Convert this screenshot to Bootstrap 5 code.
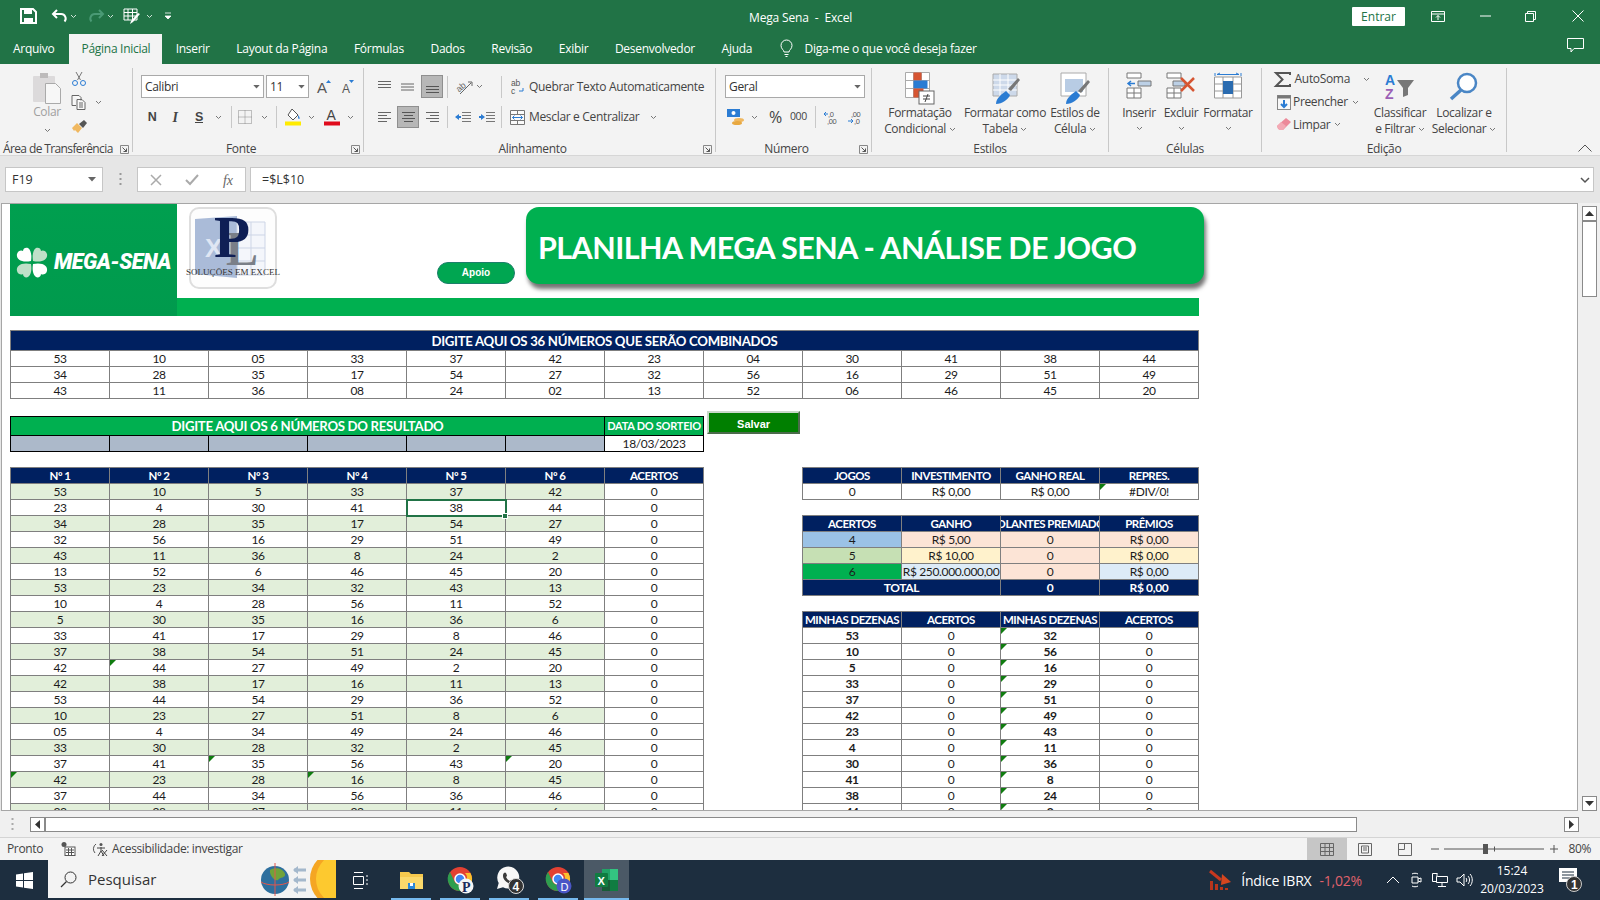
<!DOCTYPE html>
<html lang="pt-BR"><head><meta charset="utf-8"><title>Mega Sena - Excel</title>
<link rel="stylesheet" href="https://cdn.jsdelivr.net/npm/bootstrap@5.3.0/dist/css/bootstrap.min.css">
<style>
html,body{height:100%}
body{width:1600px;height:900px;overflow:hidden;background:#e6e6e6;font-family:"Open Sans","Noto Sans",sans-serif;font-size:12px;color:#444;display:flex;flex-direction:column}
svg{display:block;flex:none;overflow:visible}
.tbar{height:32px;background:#217346;color:#fff;position:relative}
.qa{padding-left:20px}
.wtitle{position:absolute;left:749px;top:9px;font-size:12px;letter-spacing:-.15px}
.entrar{width:53px;height:19px;background:#fff;color:#217346;font-size:12px;line-height:19px;margin-right:26px;border-radius:1px}
.wc{padding-right:16px}
.m34{margin-left:34px}.m35{margin-left:35px}.m36{margin-left:36px}.m14{margin-left:14px}
.tabs{height:32px;background:#217346;color:#fff;font-size:12px;padding-top:2px}
.tb{padding:0 13.3px;line-height:29px;white-space:nowrap;letter-spacing:-.28px}
.tb.first{padding:0;margin:0 15px 0 13px}
.tb.on{background:#f3f3f3;color:#217346;padding:0 12px}
.tellme{margin-left:14px;gap:10px;letter-spacing:-.28px}
.ribbon{height:92px;background:#f3f3f3;border-bottom:1px solid #d6d6d6;padding-top:4px;position:relative}
.rg{height:84px;border-right:1px solid #c8c8c8;position:relative;flex:none;letter-spacing:-.33px}
.rb{height:68px;display:flex}
.rl{position:absolute;left:0;right:0;top:73px;text-align:center;line-height:16px;color:#444}
.rl.wl{padding-right:14px}
.ln{position:absolute;right:3px;top:77px}
.r1{width:133px}.r2{width:231px}.r3{width:352px}.r4{width:156px}.r5{width:237px}.r6{width:153px}.r7{width:245px}
.r1 .rl{text-align:left;padding-left:3px;letter-spacing:-.62px}
.pad31{padding-left:31px}
.paste{width:32px;color:#a0a0a0;line-height:16px;margin-right:8px}
.cbcol{gap:9px;padding-top:3px}
.rowa,.rowb{display:flex;align-items:center}
.rowa{height:23px;margin-top:7px}
.rowb{height:22px;margin-top:8px}
.colf{display:block;width:100%}
.p8{padding-left:8px}.p13{padding-left:13px}.p9{padding-left:9px}.p6{padding-left:6px}.p12{padding-left:12px}
.sel{height:23px;background:#fff;border:1px solid #a9a9a9;padding:0 3px;line-height:21px;color:#333;display:flex;align-items:center;justify-content:space-between}
.w123{width:123px}.w43{width:43px}.w140{width:140px}
.bt{width:16px;text-align:center;font-weight:700;color:#444;font-size:12.5px;font-family:"Liberation Sans",sans-serif}
.it{font-style:italic;font-family:"Liberation Serif",serif;font-size:14px}
.un{text-decoration:underline}
.vs{width:1px;height:22px;background:#c8c8c8;flex:none}
.act{background:#b7b7b7;border:1px solid #8f8f8f;width:22px;height:23px;display:flex;align-items:center;justify-content:center}
.rowb .act{height:22px}
.m2{margin-left:2px}.m3{margin-left:3px}.m4{margin-left:4px}.m5{margin-left:5px}.m6{margin-left:6px}.m7{margin-left:7px}.m8{margin-left:8px}.m9{margin-left:9px}.m10{margin-left:10px}.m11{margin-left:11px}.m13{margin-left:13px}.m16{margin-left:16px}.m18{margin-left:18px}.m19{margin-left:19px}.m26{margin-left:26px}
.bb{display:flex;flex-direction:column;align-items:center;text-align:center;line-height:16px;white-space:nowrap}
.bb>svg{margin-top:4px;height:33px}
.bb .cvb{margin-top:5px;height:5px}
.w84{width:84px}.w86{width:86px}.w54{width:54px}.w42{width:42px}.w52{width:52px}.w60{width:60px}.w68{width:68px}.w96{width:96px}
.erow{height:23px;display:flex;align-items:center}
.ico18{width:19px;display:flex;justify-content:center}
.collapse-up{position:absolute;right:8px;top:80px}
.fbar{height:44px;background:#e6e6e6;padding:11px 6px 0 5px}
.fb{height:25px;background:#fff;border:1px solid #c6c6c6;display:flex;align-items:center}
.nbox{width:98px;padding:0 6px;justify-content:space-between;color:#333;font-size:12.5px}
.dots{width:34px;display:flex;justify-content:center;padding-top:6px}
.fxb{width:109px;justify-content:space-between;padding:0 12px;color:#666;font-family:"Liberation Serif",serif;font-style:italic;font-size:14px}
.finp{flex:1;margin-left:4px;padding:0 3px 0 11px;justify-content:space-between;color:#333;font-size:12.5px}
.fb span{padding-top:2px}
.work{height:611px;display:flex;padding-top:3px;background:#e6e6e6}
.sheet{width:1577px;height:608px;background:#fff;border:1px solid #a6a6a6;margin-left:1px;overflow:hidden;padding-left:8px;font-family:Lato,"Liberation Sans",sans-serif;color:#1c1c1c}
.banner{width:1189px;height:112px;position:relative;display:flex}
.logo{width:167px;height:112px;background:linear-gradient(180deg,#009f4f,#009a4d);display:flex;align-items:center;padding:4px 0 0 6px;gap:6px}
.lname{color:#fff;font-weight:900;font-style:italic;font-family:Roboto,sans-serif;font-size:21.5px;letter-spacing:-.5px;white-space:nowrap}
.band{position:absolute;left:167px;right:0;bottom:0;height:18px;background:#00b050}
.plogo{position:absolute;left:175px;top:3px}
.plcap{font-family:"Liberation Serif",serif;font-size:9px;fill:#333}
.apoio{position:absolute;left:427px;top:58px;width:78px;height:22px;border-radius:11px;background:#00a651;border:1px solid #1c7f6a;color:#fff;font-size:10px;font-weight:700;line-height:20px;text-align:center;font-family:"Liberation Sans",sans-serif}
.ttl{position:absolute;left:516px;top:3px;width:678px;height:77px;border-radius:13px;background:#00b050;box-shadow:2px 5px 4px rgba(0,0,0,.55);color:#fff;font-weight:700;font-size:30.5px;line-height:80px;padding-left:12px;letter-spacing:-.55px;white-space:nowrap;font-family:Lato,sans-serif}
.xt{table-layout:fixed;border-collapse:collapse;font-size:12px;text-align:center}
.xt td,.xt th{height:16px;padding:0;border:1px solid #7f7f7f;line-height:14px;white-space:nowrap;overflow:hidden;position:relative;font-weight:400;letter-spacing:-.35px}
.c12{width:1188px;margin-top:14px}
.c12 col,.c7 col,.c4 col{width:99px}
.c7{width:693px}.c4{width:396px}
.xt .nv th{background:#002060;color:#fff;font-weight:700;letter-spacing:-.5px;font-size:11.5px}
.xt .big th{height:20px;font-size:13.2px;letter-spacing:-.3px}
.xt .gn th{background:#00b050;color:#fff;height:19px;font-weight:700;font-size:13.2px;letter-spacing:-.3px}
.xt .gn .dt{font-size:11px;letter-spacing:-.25px}
.blk td,.blk th{border-color:#000}
.gy td{background:#acb9ca}
.res{margin-top:17px}
.salvar{width:93px;height:23px;margin:12px 0 0 3px;padding:3px 0 0;border-radius:0;background:#007f00;color:#fff;font-size:11px;font-weight:700;line-height:16px;border:2px solid;border-color:#c8d8c8 #4b6b4b #4b6b4b #c8d8c8;font-family:"Liberation Sans",sans-serif}
.lower{margin-top:15px;display:flex;gap:98px}
.rcol{display:flex;flex-direction:column;gap:15px}
.gr td:not(:last-child){background:#e2efda}
.sc{outline:2px solid #217346;outline-offset:-1px;z-index:2}
.cellwrap{position:relative}
.handle{position:absolute;left:492px;top:46px;width:6px;height:6px;background:#217346;border:1px solid #fff;z-index:3}
.gt::before{content:"";position:absolute;left:0;top:0;border-top:6px solid #107c10;border-right:6px solid transparent}
.b4{background:#9bc2e6}.b5{background:#c6e0b4}.b6{background:#00b050}.pe{background:#fce4d6}.ye{background:#fff2cc}.lb{background:#ddebf7}
.tot td{background:#002060;color:#fff;font-weight:700}
.bd td:nth-child(odd){font-weight:700}
.clipc{display:block;margin:0 -30px;text-align:center}
.vsb{width:22px;height:608px;background:#f0f0f0;display:flex;flex-direction:column;align-items:center;padding-top:3px}
.sbtn{width:15px;height:15px;background:#fff;border:1px solid #8a8a8a;display:flex;align-items:center;justify-content:center;flex:none}
.vth{width:15px;height:76px;background:#fff;border:1px solid #8a8a8a}
.hsb{height:27px;background:#f0f0f0;border-bottom:1px solid #d4d4d4;display:flex;align-items:center;padding-left:11px}
.hth{width:1312px;height:15px;background:#fff;border:1px solid #8a8a8a}
.htrack{width:207px}
.stat{height:22px;background:#f3f3f3;display:flex;align-items:center;padding-left:7px;position:relative;color:#444;letter-spacing:-.35px}
.gridv{width:40px;height:22px;background:#c6c6c6;display:flex;align-items:center;justify-content:center}
.pct{margin:0 9px 0 10px}
.taskb{height:40px;background:#1d2e3f;display:flex;align-items:center;color:#fff;position:relative}
.winb{width:48px;display:flex;justify-content:center}
.srch{width:288px;height:38px;margin-bottom:2px;align-self:flex-start;background:#f3f3f3;color:#333;display:flex;align-items:center;padding-left:12px;font-size:15px;gap:11px}
.srch .sp{flex:1}
.tk{width:49px;height:40px;display:flex;align-items:center;justify-content:center;position:relative}
.tk.u::after{content:"";position:absolute;left:4px;right:5px;bottom:0;height:2px;background:#76b9ed}
.tk.ac{background:#4b5966;width:45px;margin-left:1px}
.tk.ac::after{left:0;right:0}
.tvw{margin-left:16px;margin-right:19px}
.ixt{font-size:14px;letter-spacing:-.2px}
.ixp{color:#e0626c;font-size:14px;letter-spacing:-.2px}
.clk{width:70px;text-align:center;font-size:12px;line-height:18px}
</style></head><body>
<svg width="0" height="0" class="position-absolute"><defs>
<symbol id="cv" viewBox="0 0 7 5"><path d="M1 1l2.500 2.500L6 1" fill="none" stroke="#777" stroke-width="1"/></symbol>
<symbol id="cw" viewBox="0 0 7 5"><path d="M1 1l2.500 2.500L6 1" fill="none" stroke="#cfe3d8" stroke-width="1"/></symbol>
<symbol id="dd" viewBox="0 0 8 5"><path d="M0 0h8L4 4.500z" fill="#666"/></symbol>
<symbol id="lnc" viewBox="0 0 9 9"><path d="M.5.5h8v8h-8z" fill="none" stroke="#888"/><path d="M2.500 2.500l4 4M6.500 3.500v3h-3" fill="none" stroke="#555"/></symbol>
</defs></svg>

<header class="tbar d-flex align-items-center">
 <div class="qa d-flex align-items-center">
  <svg width="17" height="16" viewBox="0 0 17 16"><path d="M1 1h12l3 3v11H1z" fill="none" stroke="#fff" stroke-width="2"/><path d="M4 1.500h8V6H4zM4 10h9v5H4z" fill="#fff"/></svg>
  <svg class="m14" width="17" height="14" viewBox="0 0 17 14"><path d="M6 1L2 5l4 4" fill="none" stroke="#fff" stroke-width="2"/><path d="M2 5h8a4.500 4.500 0 0 1 3.500 7.500" fill="none" stroke="#fff" stroke-width="2"/></svg>
  <svg class="m2" width="7" height="5"><use href="#cw"/></svg>
  <svg class="m11" width="16" height="14" viewBox="0 0 16 14"><path d="M11 1l4 4-4 4M15 5H7a4.500 4.500 0 0 0-3.500 7.500" fill="none" stroke="#4a9a75" stroke-width="2"/></svg>
  <svg class="m3" width="7" height="5"><use href="#cw"/></svg>
  <svg class="m9" width="18" height="17" viewBox="0 0 18 17"><path d="M1 1h13v11H1zM1 4.500h13M1 8h13M5 1v11M9.500 1v11" fill="none" stroke="#fff"/><path d="M17 6l-7 8-3 2 1-3 7-8z" fill="#fff"/></svg>
  <svg class="m5" width="7" height="5"><use href="#cw"/></svg>
  <svg class="m11" width="8" height="8" viewBox="0 0 8 8"><path d="M1 1h6M1 4h6L4 7z" fill="#fff" stroke="#fff" stroke-width=".8"/></svg>
 </div>
 <div class="wtitle">Mega Sena&nbsp; -&nbsp; Excel</div>
 <div class="ms-auto d-flex align-items-center wc">
  <div class="entrar text-center">Entrar</div>
  <svg width="14" height="11" viewBox="0 0 14 11"><path d="M.5.5h13v10H.5zM.5 3h13M7 9V4.500M5 6.500l2-2 2 2" fill="none" stroke="#fff"/></svg>
  <svg class="m35" width="11" height="2" viewBox="0 0 11 2"><path d="M0 1h11" stroke="#fff"/></svg>
  <svg class="m34" width="11" height="11" viewBox="0 0 11 11"><path d="M.5 2.500h8v8h-8zM2.500 2.500v-2h8v8h-2" fill="none" stroke="#fff"/></svg>
  <svg class="m36" width="12" height="12" viewBox="0 0 12 12"><path d="M.5.5l11 11M11.500.5l-11 11" stroke="#fff"/></svg>
 </div>
</header>

<nav class="tabs d-flex position-relative">
 <div class="tb first">Arquivo</div><div class="tb on">Página Inicial</div><div class="tb">Inserir</div><div class="tb">Layout da Página</div><div class="tb">Fórmulas</div><div class="tb">Dados</div><div class="tb">Revisão</div><div class="tb">Exibir</div><div class="tb">Desenvolvedor</div><div class="tb">Ajuda</div>
 <div class="tellme d-flex align-items-center">
  <svg width="15" height="18" viewBox="0 0 15 18"><path d="M5 12c0-2-3-3-3-6.500a5.500 5.500 0 0 1 11 0C13 9 10 10 10 12zM5.500 14.500h4M6.500 16.500h2" fill="none" stroke="#fff"/></svg><span>Diga-me o que você deseja fazer</span>
 </div>
 <svg class="position-absolute end-0 me-3 mt-1" width="17" height="15" viewBox="0 0 17 15"><path d="M.5.5h16v10H7l-3 3.500v-3.500H.5z" fill="none" stroke="#fff"/></svg>
</nav>

<section class="ribbon d-flex">
 <div class="rg r1"><div class="rb pad31">
   <div class="paste text-center">
    <svg class="mt-1 mx-auto" width="30" height="32" viewBox="0 0 30 32"><rect x="1" y="4" width="22" height="26" rx="1" fill="#dcdadb"/><path d="M8 1h8v5H8z" fill="#bdbbbb"/><path d="M13.500 11.500h10l5 5v15h-15z" fill="#f7f7f7" stroke="#aaa"/></svg>
    <div class="colf mt-0">Colar</div>
    <svg class="mx-auto mt-2" width="7" height="5"><use href="#cv"/></svg>
   </div>
   <div class="d-flex flex-column cbcol">
    <svg width="16" height="15" viewBox="0 0 16 15"><path d="M5 1l4.500 8M11 1L6.500 9" stroke="#777" fill="none"/><circle cx="4" cy="12" r="2.500" fill="none" stroke="#2b7cd3"/><circle cx="12" cy="12" r="2.500" fill="none" stroke="#2b7cd3"/></svg>
    <div class="d-flex align-items-center"><svg width="16" height="15" viewBox="0 0 16 15"><path d="M1 .5h7l2 2v3M1 .5v10h4M6 4.500h5l3 3v7H6zM8 8h4M8 10h4M8 12h4" fill="#f9f9f9" stroke="#666"/></svg><svg class="m8" width="7" height="5"><use href="#cv"/></svg></div>
    <svg width="17" height="15" viewBox="0 0 17 15"><path d="M1 9l5-5 5 5-4 5-3-3-1 1z" fill="#f0b860"/><path d="M8 5l5-4 3 3-4 5z" fill="#555"/></svg>
   </div>
  </div><div class="rl">Área de Transferência</div><svg class="ln" width="9" height="9"><use href="#lnc"/></svg></div>

 <div class="rg r2 p8">
  <div class="rowa"><div class="sel w123"><span>Calibri</span><svg width="7" height="4"><use href="#dd"/></svg></div><div class="sel w43 m2"><span>11</span><svg width="7" height="4"><use href="#dd"/></svg></div>
   <svg class="m8" width="15" height="15" viewBox="0 0 15 15"><text x="0" y="14" font-size="15" fill="#555" font-family="Liberation Sans">A</text><path d="M9 4l2.500-3L14 4z" fill="#2b7cd3"/></svg>
   <svg class="m10" width="13" height="15" viewBox="0 0 13 15"><text x="0" y="14" font-size="12" fill="#555" font-family="Liberation Sans">A</text><path d="M7 1h5L9.500 4z" fill="#2b7cd3"/></svg></div>
  <div class="rowb"><div class="bt m3">N</div><div class="bt it m7">I</div><div class="bt un m8">S</div><svg class="m8" width="7" height="5"><use href="#cv"/></svg><div class="vs m9"></div>
   <svg class="m6" width="14" height="14" viewBox="0 0 14 14"><path d="M.5.5h13v13H.5zM7 .5v13M.5 7h13" fill="none" stroke="#888" stroke-dasharray="1 1"/></svg><svg class="m9" width="7" height="5"><use href="#cv"/></svg><div class="vs m8"></div>
   <svg class="m8" width="16" height="18" viewBox="0 0 16 18"><path d="M7 1l6 6-5 5-5-5z" fill="#fff" stroke="#555"/><path d="M13 7c2 2 2 4 1 4s-1-2-1-4z" fill="#2b7cd3"/><rect y="13.500" width="16" height="4" fill="#ffeb00"/></svg><svg class="m7" width="7" height="5"><use href="#cv"/></svg>
   <svg class="m9" width="16" height="18" viewBox="0 0 16 18"><text x="2.500" y="12" font-size="14" fill="#444" font-family="Liberation Sans">A</text><rect y="13.500" width="16" height="4" fill="#e00b1c"/></svg><svg class="m7" width="7" height="5"><use href="#cv"/></svg></div>
  <div class="rl wl">Fonte</div><svg class="ln" width="9" height="9"><use href="#lnc"/></svg></div>

 <div class="rg r3 p13">
  <div class="rowa">
   <svg width="15" height="12" viewBox="0 0 15 12"><path d="M1 .5h13M1 3.500h13M1 6.500h13" stroke="#666"/></svg>
   <svg class="m8" width="15" height="12" viewBox="0 0 15 12"><path d="M1 3h13M1 6h13M1 9h13" stroke="#666"/></svg>
   <div class="act m6"><svg width="15" height="12" viewBox="0 0 15 12"><path d="M1 5.500h13M1 8.500h13M1 11.500h13" stroke="#555"/></svg></div>
   <div class="vs m4"></div>
   <svg class="m7" width="18" height="16" viewBox="0 0 18 16"><text x="1" y="11" font-size="9" fill="#666" font-family="Liberation Sans" transform="rotate(-40 6 8)">ab</text><path d="M5 15L16 4M13 3h4v4" fill="none" stroke="#666"/></svg>
   <svg class="m3" width="7" height="5"><use href="#cv"/></svg>
   <div class="vs m18"></div>
   <svg class="m9" width="15" height="16" viewBox="0 0 15 16"><text x="0" y="7" font-size="8.500" fill="#555" font-family="Liberation Sans">ab</text><text x="0" y="15" font-size="8.500" fill="#555" font-family="Liberation Sans">c</text><path d="M12 9v3H8" stroke="#2b7cd3" fill="none"/></svg>
   <span class="m3 text-nowrap">Quebrar Texto Automaticamente</span>
  </div>
  <div class="rowb">
   <svg width="15" height="11" viewBox="0 0 15 11"><path d="M1 .5h13M1 3.500h9M1 6.500h13M1 9.500h9" stroke="#666"/></svg>
   <div class="act m5"><svg width="15" height="11" viewBox="0 0 15 11"><path d="M1 .5h13M3 3.500h9M1 6.500h13M3 9.500h9" stroke="#555"/></svg></div>
   <svg class="m6" width="15" height="11" viewBox="0 0 15 11"><path d="M1 .5h13M5 3.500h9M1 6.500h13M5 9.500h9" stroke="#666"/></svg>
   <div class="vs m7"></div>
   <svg class="m7" width="16" height="12" viewBox="0 0 16 12"><path d="M7 1.500h9M7 4.500h9M7 7.500h9M7 10.500h9" stroke="#777"/><path d="M0 6l4-3v2h2v2H4v2z" fill="#2b7cd3"/></svg>
   <svg class="m8" width="16" height="12" viewBox="0 0 16 12"><path d="M7 1.500h9M7 4.500h9M7 7.500h9M7 10.500h9" stroke="#777"/><path d="M6 6L2 3v2H0v2h2v2z" fill="#2b7cd3"/></svg>
   <div class="vs m6"></div>
   <svg class="m8" width="15" height="15" viewBox="0 0 15 15"><path d="M.5.5h14v14H.5zM.5 4.500h14M.5 10.500h14M7.500.5v4M7.500 10.500v4" fill="#fafafa" stroke="#777"/><path d="M2.500 7.500h10M4.500 5.500l-2 2 2 2M10.500 5.500l2 2-2 2" fill="none" stroke="#2b7cd3"/></svg>
   <span class="m4 text-nowrap">Mesclar e Centralizar</span>
   <svg class="m11" width="7" height="5"><use href="#cv"/></svg>
  </div>
  <div class="rl wl">Alinhamento</div><svg class="ln" width="9" height="9"><use href="#lnc"/></svg></div>

 <div class="rg r4 p9">
  <div class="rowa"><div class="sel w140"><span>Geral</span><svg width="7" height="4"><use href="#dd"/></svg></div></div>
  <div class="rowb">
   <svg class="m2" width="18" height="18" viewBox="0 0 18 18"><rect y="1" width="13" height="8" fill="#2b7cd3"/><circle cx="6.500" cy="5" r="2" fill="#fff"/><ellipse cx="12" cy="12" rx="5" ry="2" fill="#f0b860"/><ellipse cx="10" cy="15" rx="5" ry="2" fill="#e8a840"/></svg>
   <svg class="m6" width="7" height="5"><use href="#cv"/></svg>
   <span class="m11 fs-6 lh-1">%</span><span class="m8 small">000</span><div class="vs m8"></div>
   <svg class="m8" width="13" height="15" viewBox="0 0 13 15"><text x="4" y="7" font-size="7.500" fill="#555" font-family="Liberation Sans">,0</text><text x="3" y="14" font-size="7.500" fill="#555" font-family="Liberation Sans">,00</text><path d="M0 4h4M2 2L0 4l2 2" stroke="#2b7cd3" fill="none"/></svg>
   <svg class="m11" width="14" height="15" viewBox="0 0 14 15"><text x="3" y="7" font-size="7.500" fill="#555" font-family="Liberation Sans">,00</text><text x="6" y="14" font-size="7.500" fill="#555" font-family="Liberation Sans">,0</text><path d="M0 11h5M3 9l2 2-2 2" stroke="#2b7cd3" fill="none"/></svg>
  </div>
  <div class="rl wl">Número</div><svg class="ln" width="9" height="9"><use href="#lnc"/></svg></div>

 <div class="rg r5 p6"><div class="rb">
   <div class="bb w84"><svg width="30" height="33" viewBox="0 0 30 33"><path d="M.5.500h24v25H.5zM.5 8.500h24M.5 16.500h24M8.500.5v25M16.500.5v25" fill="#fff" stroke="#aaa"/><rect x="8.500" y=".5" width="8" height="8" fill="#d65532"/><rect x="8.500" y="8.500" width="14" height="8" fill="#2b7cd3"/><rect x="8.500" y="16.500" width="10" height="9" fill="#d65532"/><rect x="14" y="19" width="15" height="13" fill="#fff" stroke="#666"/><path d="M18 24h7M18 27h7M23 22l-3 8" stroke="#444" fill="none"/></svg><span>Formatação</span><span>Condicional <svg class="d-inline-block" width="7" height="5"><use href="#cv"/></svg></span></div>
   <div class="bb w86"><svg width="30" height="33" viewBox="0 0 30 33"><path d="M3 2h24v22H3z" fill="#cdd9ea" stroke="#aaa"/><path d="M3 8h24M3 13h24M3 18h24M10 2v22M18 2v22" stroke="#fff"/><path d="M28 6l2 2-9 11-3-2z" fill="#777"/><path d="M6 32c0-6 6-10 10-13l4 4c-1 4-8 9-14 9z" fill="#2b7cd3"/></svg><span>Formatar como</span><span>Tabela <svg class="d-inline-block" width="7" height="5"><use href="#cv"/></svg></span></div>
   <div class="bb w54"><svg width="30" height="33" viewBox="0 0 30 33"><path d="M1 1h25v23H1z" fill="#fff" stroke="#aaa"/><path d="M5 7h18v13H5z" fill="#b8cce4"/><path d="M28 8l2 2-9 11-3-2z" fill="#777"/><path d="M6 32c0-6 6-10 10-13l4 4c-1 4-8 9-14 9z" fill="#2b7cd3"/></svg><span>Estilos de</span><span>Célula <svg class="d-inline-block" width="7" height="5"><use href="#cv"/></svg></span></div>
  </div><div class="rl">Estilos</div></div>

 <div class="rg r6 p9"><div class="rb">
   <div class="bb w42"><svg width="26" height="33" viewBox="0 0 26 33"><path d="M1 1h14v5H1zM1 16h14v10H1zM8 16v10M1 21h14" fill="#fff" stroke="#777"/><path d="M12 9h13v5H12z" fill="#bcd0e6" stroke="#777"/><path d="M9 11.500H2M5 9l-3 2.500L5 14" fill="none" stroke="#2b7cd3" stroke-width="1.500"/></svg><span class="mt-0">Inserir</span><svg class="cvb" width="7" height="5"><use href="#cv"/></svg></div>
   <div class="bb w42"><svg width="30" height="33" viewBox="0 0 30 33"><path d="M1 1h14v5H1zM1 16h14v10H1zM8 16v10M1 21h14" fill="#fff" stroke="#777"/><path d="M7 9h12v5H7z" fill="#bcd0e6" stroke="#777"/><path d="M15 6l13 13M28 6L15 19" stroke="#d65532" stroke-width="2.500"/></svg><span>Excluir</span><svg class="cvb" width="7" height="5"><use href="#cv"/></svg></div>
   <div class="bb w52"><svg width="28" height="33" viewBox="0 0 28 33"><path d="M1 4l0-3M27 1v3M3 2.500h22M3 2.500l3-1.500M25 2.500l-3-1.500" stroke="#2b7cd3" fill="none"/><path d="M.5 5h27v21H.5zM.5 12h27M.5 19h27M9 5v21M19 5v21" fill="#fff" stroke="#999"/><rect x="9" y="9" width="10" height="13" fill="#2b6cb0"/></svg><span>Formatar</span><svg class="cvb" width="7" height="5"><use href="#cv"/></svg></div>
  </div><div class="rl">Células</div></div>

 <div class="rg r7 p12"><div class="rb">
   <div class="d-flex flex-column w96">
    <div class="erow"><div class="ico18"><svg width="16" height="15" viewBox="0 0 16 15"><path d="M15 3V1H1l6.500 6.500L1 14h14v-2" fill="none" stroke="#555" stroke-width="2"/></svg></div><span class="m3">AutoSoma</span><svg class="m13" width="7" height="5"><use href="#cv"/></svg></div>
    <div class="erow"><div class="ico18"><svg width="14" height="15" viewBox="0 0 14 15"><rect x=".5" y=".5" width="13" height="14" fill="#f8f8f8" stroke="#888"/><rect x=".5" y=".5" width="13" height="3" fill="#777"/><path d="M7 5v7M4 9l3 3 3-3" fill="none" stroke="#2b7cd3" stroke-width="2"/></svg></div><span>Preencher</span><svg class="m4" width="7" height="5"><use href="#cv"/></svg></div>
    <div class="erow"><div class="ico18"><svg width="14" height="13" viewBox="0 0 14 13"><path d="M9 0l5 4-8 8-5-1-1-3z" fill="#ec8a9a"/><path d="M0 8l4-4 5 4-3 4H2z" fill="#f3aab5"/></svg></div><span>Limpar</span><svg class="m4" width="7" height="5"><use href="#cv"/></svg></div>
   </div>
   <div class="bb w60"><svg width="30" height="33" viewBox="0 0 30 33"><text x="0" y="13" font-size="14" font-weight="700" fill="#2b7cd3" font-family="Liberation Sans">A</text><text x="0" y="27" font-size="14" font-weight="700" fill="#9b5fb5" font-family="Liberation Sans">Z</text><path d="M12 8h17l-6 8v7l-5 2v-9z" fill="#777"/></svg><span>Classificar</span><span>e Filtrar <svg class="d-inline-block" width="7" height="5"><use href="#cv"/></svg></span></div>
   <div class="bb w68"><svg width="30" height="33" viewBox="0 0 30 33"><circle cx="18" cy="11" r="9" fill="#fff" stroke="#4a86c5" stroke-width="2.500"/><path d="M12 18L2 27" stroke="#4a86c5" stroke-width="3.500"/></svg><span>Localizar e</span><span>Selecionar <svg class="d-inline-block" width="7" height="5"><use href="#cv"/></svg></span></div>
  </div><div class="rl">Edição</div></div>
 <svg class="collapse-up" width="14" height="8" viewBox="0 0 14 8"><path d="M.5 7.500L7 1l6.500 6.500" fill="none" stroke="#555"/></svg>
</section>

<section class="fbar d-flex">
 <div class="fb nbox"><span>F19</span><svg width="8" height="5"><use href="#dd"/></svg></div>
 <div class="dots"><svg width="3" height="13" viewBox="0 0 3 13"><path d="M1.500 0v13" stroke="#999" stroke-width="2" stroke-dasharray="2 3"/></svg></div>
 <div class="fb fxb"><svg width="12" height="12" viewBox="0 0 12 12"><path d="M1 1l10 10M11 1L1 11" stroke="#aaa" stroke-width="1.500"/></svg><svg width="14" height="12" viewBox="0 0 14 12"><path d="M1 6l4 4 8-9" fill="none" stroke="#aaa" stroke-width="2"/></svg><span>fx</span></div>
 <div class="fb finp"><span>=$L$10</span><svg width="10" height="6" viewBox="0 0 10 6"><path d="M1 1l4 4 4-4" fill="none" stroke="#555" stroke-width="1.500"/></svg></div>
</section>

<main class="work">
 <div class="sheet">
  <div class="banner">
   <div class="logo"><svg width="32" height="31" viewBox="0 0 32 31"><path d="M15 14C5 16 0 12 1 7c1-4 5-4 6-3 0-3 3-4 5-3 3 2 4 7 3 13z" fill="#fff"/><path d="M17 14c10 2 15-2 14-7-1-4-5-4-6-3 0-3-3-4-5-3-3 2-4 7-3 13z" fill="#bfe0c8"/><path d="M15 17C5 15 0 19 1 24c1 4 5 4 6 3 0 3 3 4 5 3 3-2 4-7 3-13z" fill="#bfe0c8"/><path d="M17 17c10-2 15 2 14 7-1 4-5 4-6 3 0 3-3 4-5 3-3-2-4-7-3-13z" fill="#fff"/></svg><span class="lname">MEGA-SENA</span></div>
   <div class="band"></div>
   <svg class="plogo" width="98" height="84" viewBox="0 0 98 84"><rect x="5" y="1" width="86" height="80" rx="9" fill="#fdfdfd" stroke="#dedede" stroke-width="2"/><path d="M10 12l42-3v62l-42-4z" fill="#aabbd8"/><path d="M52 15h28v53H52z" fill="#f4f6fb" stroke="#cdd5e6"/><path d="M52 28h28M52 41h28M52 54h28M66 15v53" stroke="#cdd5e6"/><text x="20" y="50" font-size="26" fill="#dfe6f3" font-family="Liberation Sans" font-weight="700">X</text><text x="41" y="58" font-size="48" fill="#7a7f88" font-weight="700" font-family="Liberation Serif">L</text><text x="29" y="50" font-size="59" fill="#0f1f55" font-weight="700" font-family="Liberation Serif">P</text><text class="plcap" x="1" y="68" textLength="94" lengthAdjust="spacingAndGlyphs">SOLUÇÕES EM EXCEL</text></svg>
   <div class="apoio">Apoio</div>
   <div class="ttl">PLANILHA MEGA SENA - ANÁLISE DE JOGO</div>
  </div>

  <table class="xt c12">
   <colgroup><col><col><col><col><col><col><col><col><col><col><col><col></colgroup>
   <tr class="nv big"><th colspan="12" class="blk">DIGITE AQUI OS 36 NÚMEROS QUE SERÃO COMBINADOS</th></tr>
   <tr><td>53</td><td>10</td><td>05</td><td>33</td><td>37</td><td>42</td><td>23</td><td>04</td><td>30</td><td>41</td><td>38</td><td>44</td></tr>
   <tr><td>34</td><td>28</td><td>35</td><td>17</td><td>54</td><td>27</td><td>32</td><td>56</td><td>16</td><td>29</td><td>51</td><td>49</td></tr>
   <tr><td>43</td><td>11</td><td>36</td><td>08</td><td>24</td><td>02</td><td>13</td><td>52</td><td>06</td><td>46</td><td>45</td><td>20</td></tr>
  </table>

  <div class="d-flex">
   <table class="xt c7 res blk">
    <colgroup><col><col><col><col><col><col><col></colgroup>
    <tr class="gn"><th colspan="6">DIGITE AQUI OS 6 NÚMEROS DO RESULTADO</th><th class="dt">DATA DO SORTEIO</th></tr>
    <tr class="gy"><td></td><td></td><td></td><td></td><td></td><td></td><td class="bg-white">18/03/2023</td></tr>
   </table>
   <button type="button" class="btn salvar">Salvar</button>
  </div>

  <div class="lower">
   <div class="cellwrap">
   <table class="xt c7">
    <colgroup><col><col><col><col><col><col><col></colgroup>
    <tr class="nv"><th>Nº 1</th><th>Nº 2</th><th>Nº 3</th><th>Nº 4</th><th>Nº 5</th><th>Nº 6</th><th>ACERTOS</th></tr>
    <tr class="gr"><td>53</td><td>10</td><td>5</td><td>33</td><td>37</td><td>42</td><td>0</td></tr>
    <tr><td>23</td><td>4</td><td>30</td><td>41</td><td class="sc">38</td><td>44</td><td>0</td></tr>
    <tr class="gr"><td>34</td><td>28</td><td>35</td><td>17</td><td>54</td><td>27</td><td>0</td></tr>
    <tr><td>32</td><td>56</td><td>16</td><td>29</td><td>51</td><td>49</td><td>0</td></tr>
    <tr class="gr"><td>43</td><td>11</td><td>36</td><td>8</td><td>24</td><td>2</td><td>0</td></tr>
    <tr><td>13</td><td>52</td><td>6</td><td>46</td><td>45</td><td>20</td><td>0</td></tr>
    <tr class="gr"><td>53</td><td>23</td><td>34</td><td>32</td><td>43</td><td>13</td><td>0</td></tr>
    <tr><td>10</td><td>4</td><td>28</td><td>56</td><td>11</td><td>52</td><td>0</td></tr>
    <tr class="gr"><td>5</td><td>30</td><td>35</td><td>16</td><td>36</td><td>6</td><td>0</td></tr>
    <tr><td>33</td><td>41</td><td>17</td><td>29</td><td>8</td><td>46</td><td>0</td></tr>
    <tr class="gr"><td>37</td><td>38</td><td>54</td><td>51</td><td>24</td><td>45</td><td>0</td></tr>
    <tr><td>42</td><td class="gt">44</td><td>27</td><td>49</td><td>2</td><td>20</td><td>0</td></tr>
    <tr class="gr"><td>42</td><td>38</td><td>17</td><td>16</td><td>11</td><td>13</td><td>0</td></tr>
    <tr><td>53</td><td>44</td><td>54</td><td>29</td><td>36</td><td>52</td><td>0</td></tr>
    <tr class="gr"><td>10</td><td>23</td><td>27</td><td>51</td><td>8</td><td>6</td><td>0</td></tr>
    <tr><td>05</td><td>4</td><td>34</td><td>49</td><td>24</td><td>46</td><td>0</td></tr>
    <tr class="gr"><td>33</td><td>30</td><td>28</td><td>32</td><td>2</td><td>45</td><td>0</td></tr>
    <tr><td>37</td><td>41</td><td class="gt">35</td><td>56</td><td>43</td><td class="gt">20</td><td>0</td></tr>
    <tr class="gr"><td class="gt">42</td><td>23</td><td>28</td><td class="gt">16</td><td>8</td><td>45</td><td>0</td></tr>
    <tr><td>37</td><td>44</td><td>34</td><td>56</td><td>36</td><td>46</td><td>0</td></tr>
    <tr class="gr"><td>33</td><td>28</td><td>27</td><td>32</td><td>11</td><td>6</td><td>0</td></tr>
   </table>
   <div class="handle"></div>
   </div>
   <div class="rcol">
    <table class="xt c4">
     <colgroup><col><col><col><col></colgroup>
     <tr class="nv"><th>JOGOS</th><th>INVESTIMENTO</th><th>GANHO REAL</th><th>REPRES.</th></tr>
     <tr><td>0</td><td>R$ 0,00</td><td>R$ 0,00</td><td class="gt">#DIV/0!</td></tr>
    </table>
    <table class="xt c4">
     <colgroup><col><col><col><col></colgroup>
     <tr class="nv"><th>ACERTOS</th><th>GANHO</th><th><span class="clipc">VOLANTES PREMIADOS</span></th><th>PRÊMIOS</th></tr>
     <tr><td class="b4">4</td><td class="pe">R$ 5,00</td><td class="pe">0</td><td class="pe">R$ 0,00</td></tr>
     <tr><td class="b5">5</td><td class="ye">R$ 10,00</td><td class="pe">0</td><td class="ye">R$ 0,00</td></tr>
     <tr><td class="b6">6</td><td class="lb">R$ 250.000.000,00</td><td class="pe">0</td><td class="lb">R$ 0,00</td></tr>
     <tr class="tot"><td colspan="2">TOTAL</td><td>0</td><td>R$ 0,00</td></tr>
    </table>
    <table class="xt c4 bd">
     <colgroup><col><col><col><col></colgroup>
     <tr class="nv"><th>MINHAS DEZENAS</th><th>ACERTOS</th><th>MINHAS DEZENAS</th><th>ACERTOS</th></tr>
     <tr><td>53</td><td>0</td><td class="gt">32</td><td>0</td></tr>
     <tr><td>10</td><td>0</td><td class="gt">56</td><td>0</td></tr>
     <tr><td>5</td><td>0</td><td class="gt">16</td><td>0</td></tr>
     <tr><td>33</td><td>0</td><td class="gt">29</td><td>0</td></tr>
     <tr><td>37</td><td>0</td><td class="gt">51</td><td>0</td></tr>
     <tr><td>42</td><td>0</td><td class="gt">49</td><td>0</td></tr>
     <tr><td>23</td><td>0</td><td class="gt">43</td><td>0</td></tr>
     <tr><td>4</td><td>0</td><td class="gt">11</td><td>0</td></tr>
     <tr><td>30</td><td>0</td><td class="gt">36</td><td>0</td></tr>
     <tr><td>41</td><td>0</td><td class="gt">8</td><td>0</td></tr>
     <tr><td>38</td><td>0</td><td class="gt">24</td><td>0</td></tr>
     <tr><td>44</td><td>0</td><td class="gt">2</td><td>0</td></tr>
    </table>
   </div>
  </div>
 </div>
 <div class="vsb">
  <div class="sbtn"><svg width="9" height="5" viewBox="0 0 9 5"><path d="M0 5l4.500-5L9 5z" fill="#333"/></svg></div>
  <div class="vth"></div>
  <div class="sbtn mt-auto"><svg width="9" height="5" viewBox="0 0 9 5"><path d="M0 0l4.500 5L9 0z" fill="#333"/></svg></div>
 </div>
</main>

<div class="hsb">
 <svg width="3" height="13" viewBox="0 0 3 13"><path d="M1.500 0v13" stroke="#aaa" stroke-width="2" stroke-dasharray="2 3"/></svg>
 <div class="sbtn m16"><svg width="5" height="9" viewBox="0 0 5 9"><path d="M5 0L0 4.500 5 9z" fill="#333"/></svg></div>
 <div class="hth"></div>
 <div class="htrack"></div>
 <div class="sbtn"><svg width="5" height="9" viewBox="0 0 5 9"><path d="M0 0l5 4.500L0 9z" fill="#333"/></svg></div>
</div>

<footer class="stat">
 <span>Pronto</span>
 <svg class="m18" width="15" height="14" viewBox="0 0 15 14"><rect x="4" y="5" width="10" height="8.500" fill="#fff" stroke="#555"/><path d="M5 8h8M5 10.500h8M7.500 6v7M10.500 6v7" stroke="#555"/><circle cx="3" cy="2.500" r="2.500" fill="#555"/></svg>
 <svg class="ms-3" width="16" height="15" viewBox="0 0 16 15"><path d="M4 2a6 6 0 0 0-1 9" fill="none" stroke="#555"/><circle cx="9" cy="2.500" r="1.500" fill="#555"/><path d="M5 6h8M9 5v4M6 14l3-5 3 5M10 8l5 6M15 8l-5 6" stroke="#444" fill="none"/></svg>
 <span class="ms-1">Acessibilidade: investigar</span>
 <div class="ms-auto d-flex align-items-center">
  <div class="gridv"><svg width="14" height="13" viewBox="0 0 14 13"><path d="M.5.5h13v12H.5zM.5 4.500h13M.5 8.500h13M5 .5v12M9.500.5v12" fill="none" stroke="#666"/></svg></div>
  <svg class="m11" width="14" height="13" viewBox="0 0 14 13"><path d="M.5.5h13v12H.5z" fill="none" stroke="#666"/><path d="M3.500 3h7v7h-7zM5 5h4M5 7h4" fill="none" stroke="#666"/></svg>
  <svg class="m26" width="14" height="13" viewBox="0 0 14 13"><path d="M.5.5h13v12H.5zM.5 6.500h6V.5" fill="none" stroke="#666"/></svg>
  <svg class="m19" width="9" height="2" viewBox="0 0 9 2"><path d="M0 1h8" stroke="#555"/></svg>
  <svg class="m4" width="100" height="12" viewBox="0 0 100 12"><path d="M0 6h100" stroke="#555"/><path d="M50.500 3.500v5" stroke="#555"/><rect x="39" y="1" width="5" height="10" fill="#555"/></svg>
  <svg class="m6" width="8" height="8" viewBox="0 0 8 8"><path d="M0 4h8M4 0v8" stroke="#555"/></svg>
  <span class="pct">80%</span>
 </div>
</footer>

<div class="taskb">
 <div class="winb"><svg width="17" height="17" viewBox="0 0 17 17"><path d="M0 2.500l7-1v6.500H0zM8 1.300l9-1.300v8H8zM0 9h7v6.500l-7-1zM8 9h9v8l-9-1.300z" fill="#fff"/></svg></div>
 <div class="srch"><svg width="17" height="17" viewBox="0 0 17 17"><circle cx="10.500" cy="6.500" r="5.500" fill="none" stroke="#333"/><path d="M6.500 10.500L1 16" stroke="#333" stroke-width="1.300"/></svg><span>Pesquisar</span><span class="sp"></span>
  <svg width="78" height="38" viewBox="0 0 78 38"><defs><clipPath id="sunc"><rect x="52" width="26" height="38"/></clipPath></defs><circle cx="80" cy="19" r="28" fill="#f5a623" clip-path="url(#sunc)"/><circle cx="84" cy="19" r="26" fill="#fdc92f" clip-path="url(#sunc)"/><circle cx="17" cy="20" r="14" fill="#2d6f9e"/><path d="M12 10c5-3 13-2 15 4 1 4-5 3-7 6-3 2-9-5-8-10z" fill="#6fa33a"/><path d="M17 3v33M3 22c6 4 22 4 28 0" stroke="#e2574c" fill="none"/><path d="M36 10h12M36 20h12M36 30h12" stroke="#a4b8cc" stroke-width="3"/><path d="M40 6l-5 4 5 4zM40 16l-5 4 5 4zM40 26l-5 4 5 4z" fill="#a4b8cc"/></svg>
 </div>
 <div class="tvw"><svg width="16" height="17" viewBox="0 0 16 17"><path d="M2 .5h9M2 16.500h9M1.500 4.500h10v8h-10zM14 4h2M14 8h2M14 12h2" fill="none" stroke="#fff"/></svg></div>
 <div class="tk u"><svg width="23" height="20" viewBox="0 0 23 20"><path d="M0 2h9l2 2h12v15H0z" fill="#f6c94e"/><path d="M0 7h23v12H0z" fill="#fbd96b"/><path d="M8 13h7v6H8z" fill="#2b88d8"/><path d="M10 13h3v3h-3z" fill="#fff"/></svg></div>
 <div class="tk u"><svg width="26" height="27" viewBox="0 0 26 27"><circle cx="12" cy="12" r="12" fill="#e34133"/><path d="M22.400 6A12 12 0 0 1 12 24l5-9a6 6 0 0 0 0-9z" fill="#fbc02d"/><path d="M2 5a12 12 0 0 0 10 19l5-9a6 6 0 0 1-10.200 0z" fill="#2e9e4f"/><circle cx="12" cy="12" r="5" fill="#4285f4" stroke="#fff" stroke-width="1.500"/><circle cx="18" cy="19" r="7.500" fill="#f5f5f5"/><text x="14" y="25" font-size="14" font-weight="700" font-family="Liberation Serif" fill="#1b2a5b">P</text></svg></div>
 <div class="tk u"><svg width="28" height="28" viewBox="0 0 28 28"><path d="M1 23l1.700-6a11 11 0 1 1 4.300 4.200z" fill="#f7f7f7"/><path d="M8 7c2-2 3 2 3 3l-1 1c1 2 2 3 4 4l1-1c1 0 5 1 3 3-3 3-11-2-11-7 0-1 0-2 1-3z" fill="#3a3a3a"/><circle cx="20" cy="20" r="7.500" fill="#333" stroke="#ddd"/><text x="16.500" y="24.500" font-size="12" font-weight="700" font-family="Liberation Sans" fill="#fff">4</text></svg></div>
 <div class="tk u"><svg width="26" height="27" viewBox="0 0 26 27"><circle cx="12" cy="12" r="12" fill="#e34133"/><path d="M22.400 6A12 12 0 0 1 12 24l5-9a6 6 0 0 0 0-9z" fill="#fbc02d"/><path d="M2 5a12 12 0 0 0 10 19l5-9a6 6 0 0 1-10.200 0z" fill="#2e9e4f"/><circle cx="12" cy="12" r="5" fill="#4285f4" stroke="#fff" stroke-width="1.500"/><circle cx="18" cy="19" r="7.500" fill="#4a56c6"/><text x="14.500" y="23.500" font-size="11" font-family="Liberation Sans" fill="#fff">D</text></svg></div>
 <div class="tk u ac"><svg width="24" height="22" viewBox="0 0 24 22"><path d="M7 0h16v22H7z" fill="#21a366"/><path d="M15 0h8v11h-8z" fill="#33c481"/><path d="M7 11h8v11H7z" fill="#185c37"/><path d="M15 11h8v11h-8z" fill="#107c41"/><rect y="4" width="13" height="14" rx="1" fill="#107c41"/><text x="2.500" y="15.500" font-size="11" font-weight="700" font-family="Liberation Sans" fill="#fff">X</text></svg></div>

 <div class="ms-auto d-flex align-items-center">
  <svg width="23" height="20" viewBox="0 0 23 20"><path d="M1 1l11 9" stroke="#c8381f" stroke-width="3"/><path d="M13 4l9 8-10 3z" fill="#d6461f"/><rect x="1" y="11" width="3" height="9" fill="#b8351c"/><rect x="6" y="14" width="3" height="6" fill="#b8351c"/><rect x="11" y="17" width="3" height="3" fill="#b8351c"/><rect x="16" y="18" width="3" height="2" fill="#b8351c"/></svg>
  <span class="ixt m9">Índice IBRX</span><span class="ixp ms-2">-1,02%</span>
  <svg class="ms-4" width="14" height="8" viewBox="0 0 14 8"><path d="M1 7l6-6 6 6" fill="none" stroke="#fff"/></svg>
  <svg class="m10" width="11" height="16" viewBox="0 0 11 16"><path d="M2 5h6v6H2zM8 7l3-1v4l-3-1M2 2c1-1 5-1 6 0M2 14c1 1 5 1 6 0" fill="none" stroke="#fff"/></svg>
  <svg class="m11" width="16" height="14" viewBox="0 0 16 14"><path d="M.5.5h5M.5.5v8h4M5 .5v3M5.500 3.500H15.500v6h-11v-6zM10 9.500V13M6 13.500h8" fill="none" stroke="#fff"/></svg>
  <svg class="m8" width="16" height="14" viewBox="0 0 16 14"><path d="M1 5h3l4-4v12L4 9H1zM10 5c1 1 1 3 0 4M12 3c2 2 2 6 0 8M14 1c3 3 3 9 0 12" fill="none" stroke="#fff"/></svg>
  <div class="clk m5">15:24<br>20/03/2023</div>
  <svg class="m11 me-3" width="26" height="26" viewBox="0 0 26 26"><path d="M1 1h18v14h-5l-3 3v-3H1z" fill="#fff"/><path d="M4 5h12M4 8h12M4 11h8" stroke="#1d2e3f"/><circle cx="16" cy="17" r="7.500" fill="#333" stroke="#ccc"/><text x="13" y="21.500" font-size="12" font-weight="700" font-family="Liberation Sans" fill="#fff">1</text></svg>
 </div>
</div>
</body></html>
